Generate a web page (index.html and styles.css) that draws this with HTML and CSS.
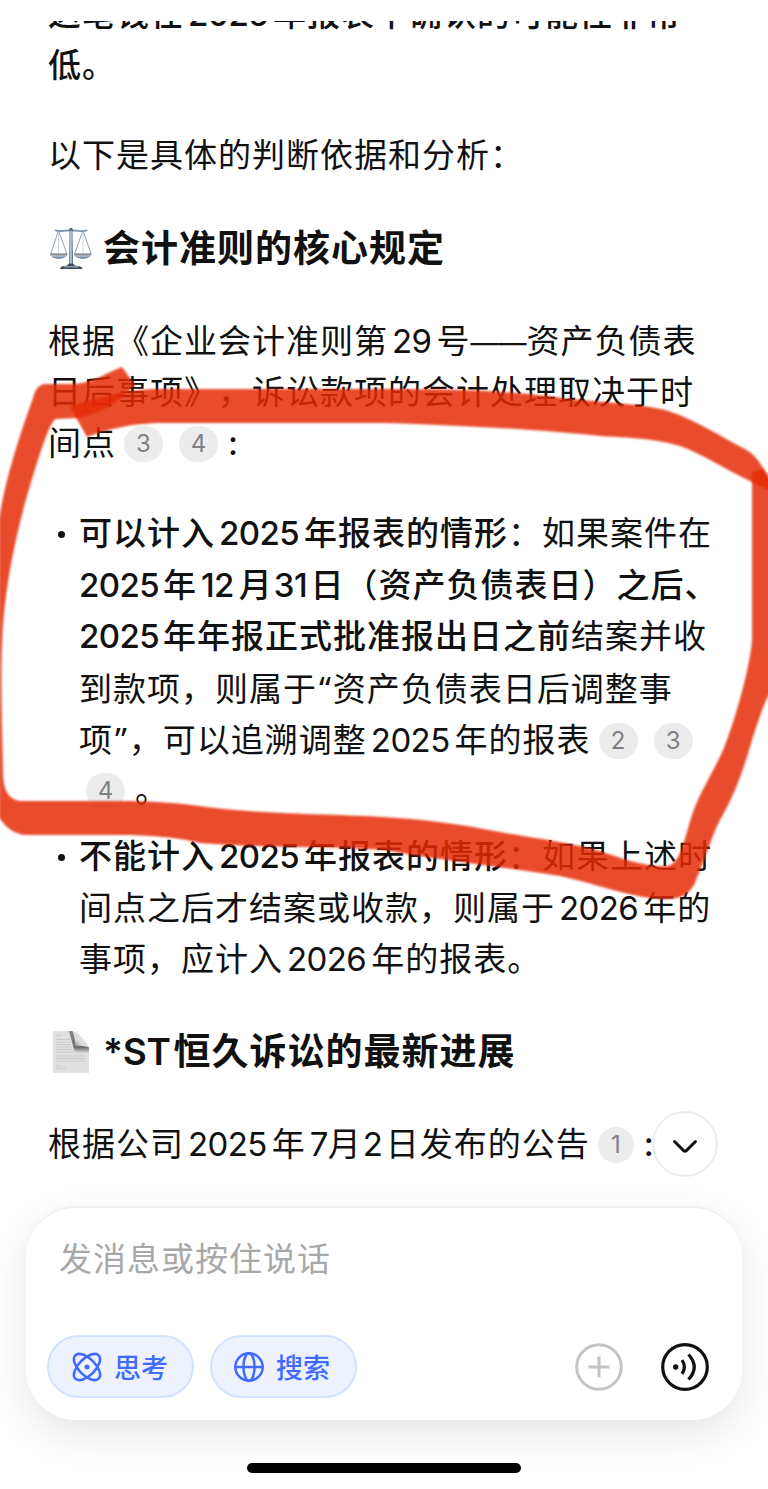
FILE: index.html
```
<!DOCTYPE html>
<html lang="zh-CN">
<head>
    <meta charset="UTF-8">
    <meta name="viewport" content="width=device-width, initial-scale=1.0">
    <title>*ST恒久诉讼</title>
    <link rel="stylesheet" href="styles.css">
</head>
<body>

    <!-- Chat Section -->
    <main class="chat">
        <div class="message">
            <p class="strong">
                <span class="line">这笔钱在<span class="num">2025</span>年报表中确认的可能性非常</span>
                <span class="line">低。</span>
            </p>

            <p class="intro"><span class="line">以下是具体的判断依据和分析：</span></p>

            <h2>
                <svg class="emoji" viewBox="0 0 44 44">
                    <defs>
                        <linearGradient id="metal" x1="0" x2="1">
                            <stop offset="0" stop-color="#5f7389"/>
                            <stop offset="0.5" stop-color="#c5d3e2"/>
                            <stop offset="1" stop-color="#3f536a"/>
                        </linearGradient>
                        <linearGradient id="pan" x1="0" x2="0" y1="0" y2="1">
                            <stop offset="0" stop-color="#6d6a68"/>
                            <stop offset="0.5" stop-color="#b9c8da"/>
                            <stop offset="1" stop-color="#455a73"/>
                        </linearGradient>
                    </defs>
                    <path d="M9.5 3.5 1.8 27M9.5 3.5 18 27M34 3.5 25.5 27M34 3.5 42.2 27" stroke="#8495a9" stroke-width="0.9" fill="none"/>
                    <path d="M9.5 4v22M34 4v22" stroke="#c3ccd6" stroke-width="0.8"/>
                    <path d="M6 3c5 3 11-1 16 1 5-2 11 2 16-1" stroke="#8295ac" stroke-width="1.8" fill="none"/>
                    <circle cx="22" cy="2.6" r="1.9" fill="#5d7086"/>
                    <path d="M20.5 4h3l.6 34h-4.2z" fill="url(#metal)"/>
                    <path d="M1 26.5h17.500c0 3-3.500 5.200-8.700 5.200S1 29.500 1 26.500zM25 26.500h17.500c0 3-3.500 5.200-8.700 5.200S25 29.500 25 26.500z" fill="url(#pan)"/>
                    <path d="M11 42c0-2.500 3-3 7-3.500l2-2h4l2 2c4 .5 7.500 1 7.500 3.500z" fill="#3d4e61"/>
                    <path d="M15 39.800h14" stroke="#b7c6d6" stroke-width="1"/>
                </svg>
                <span class="line">会计准则的核心规定</span>
            </h2>

            <p class="rule">
                <span class="line">根据《企业会计准则第<span class="num">29</span>号<span class="dash">——</span>资产负债表</span>
                <span class="line">日后事项》，诉讼款项的会计处理取决于时</span>
                <span class="line">间点<span class="ref">3</span><span class="ref">4</span><span class="colon">:</span></span>
            </p>

            <ul>
                <li>
                    <span class="line"><b>可以计入<span class="num">2025</span>年报表的情形</b>：如果案件在</span>
                    <span class="line"><b><span class="num first">2025</span>年<span class="num">12</span>月<span class="num near">31</span>日（资产负债表日）之后、</b></span>
                    <span class="line"><b><span class="num first">2025</span>年年报正式批准报出日之前</b>结案并收</span>
                    <span class="line">到款项，则属于<span class="quote">“</span>资产负债表日后调整事</span>
                    <span class="line">项<span class="quote">”</span>，可以追溯调整<span class="num">2025</span>年的报表<span class="ref">2</span><span class="ref">3</span></span>
                    <span class="line"><span class="ref lead">4</span><span class="stop">。</span></span>
                </li>
                <li>
                    <span class="line"><b>不能计入<span class="num">2025</span>年报表的情形</b>：如果上述时</span>
                    <span class="line">间点之后才结案或收款，则属于<span class="num">2026</span>年的</span>
                    <span class="line">事项，应计入<span class="num">2026</span>年的报表。</span>
                </li>
            </ul>

            <h2 class="second">
                <svg class="emoji" viewBox="0 0 44 44">
                    <defs>
                        <linearGradient id="curl" x1="0" x2="1" y1="1" y2="0">
                            <stop offset="0.1" stop-color="#8a8a8a"/>
                            <stop offset="0.4" stop-color="#dcdcdc"/>
                            <stop offset="1" stop-color="#fafafa"/>
                        </linearGradient>
                        <linearGradient id="fold" x1="0" x2="0" y1="0" y2="1">
                            <stop offset="0" stop-color="#8a8a8a"/>
                            <stop offset="0.75" stop-color="#6e6e6e"/>
                            <stop offset="1" stop-color="#dedede"/>
                        </linearGradient>
                    </defs>
                    <path d="M4 1h19l17 17v25H4z" fill="#e0e0e0"/>
                    <path d="M7 5.500h6M7 9.500h14M7 12h15M7 14.500h15M7 17h16M7 19.500h17M7 22h18M7 26h29M7 28.500h29M7 31h28M7 36h5M7 38.500h10" stroke="#cacaca" stroke-width="1"/>
                    <path d="M20 1h4l3 14 13 2v6H26z" fill="url(#fold)"/>
                    <path d="M23 1C29 2 37 10 40 18 36 14 31 15 26 16 28 9 27 4 23 1z" fill="url(#curl)"/>
                </svg>
                <span class="line"><span class="latin">*ST</span>恒久诉讼的最新进展</span>
            </h2>

            <p class="notice"><span class="line">根据公司<span class="num">2025</span>年<span class="num slim">7</span>月<span class="num near">2</span>日发布的公告<span class="ref narrow">1</span><span class="colon">:</span></span></p>
        </div>

        <button class="scroll-btn" aria-label="滚动到底部">
            <svg width="26" height="16" viewBox="0 0 26 16"><path d="M2.500 3.500 11.400 12.300Q13 13.800 14.600 12.300L23.500 3.500" fill="none" stroke="#111" stroke-width="3" stroke-linecap="round"/></svg>
        </button>
    </main>

    <!-- Message Box -->
    <section class="composer">
        <div class="placeholder">发消息或按住说话</div>
        <div class="toolbar">
            <button class="pill">
                <svg width="32" height="32" viewBox="0 0 32 32" fill="none" stroke="#416bff" stroke-width="2.600">
                    <ellipse cx="16" cy="16" rx="16.500" ry="8.300" transform="rotate(45 16 16)"/>
                    <ellipse cx="16" cy="16" rx="16.500" ry="8.300" transform="rotate(-45 16 16)"/>
                    <circle cx="16" cy="16" r="2.500" fill="#416bff" stroke="none"/>
                </svg>
                <span>思考</span>
            </button>
            <button class="pill">
                <svg width="32" height="32" viewBox="0 0 32 32" fill="none" stroke="#416bff" stroke-width="2.500">
                    <circle cx="16" cy="16" r="13.700"/>
                    <ellipse cx="16" cy="16" rx="5.600" ry="13.700"/>
                    <path d="M2.500 16h27"/>
                </svg>
                <span>搜索</span>
            </button>
            <div class="actions">
                <svg width="48" height="48" viewBox="0 0 48 48" fill="none" stroke="#c4c4c4" stroke-width="3">
                    <circle cx="24" cy="24" r="22.300"/>
                    <path d="M24 13.500v21M13.500 24h21"/>
                </svg>
                <svg width="48" height="48" viewBox="0 0 48 48" fill="none" stroke="#111" stroke-width="3.200">
                    <circle cx="24" cy="24" r="22.300"/>
                    <circle cx="14.700" cy="24" r="2.700" fill="#111" stroke="none"/>
                    <path d="M21 17.200Q25.800 24 21 30.800M27.500 11.500Q39 24 27.500 36.500"/>
                </svg>
            </div>
        </div>
    </section>

    <div class="home-bar"></div>

    <!-- Marker circle -->
    <svg class="marker" width="768" height="1489" viewBox="0 0 768 1489">
        <path d="M70 407 87 437C105 430 130 423 165 423H384C480 426 540 430 600 436 640 438 660 440 680 446 700 453 725 469 752 482L772 492V484C762 465 756 455 745 449 720 436 690 417 665 410 630 402 590 402 555 397 500 390 450 389 384 389H160C130 389 95 397 70 407Z"/>
        <path d="M752 472V640C750 668 735 720 724 748 712 775 698 795 691 818 683 845 680 862 668 866 650 867 632 862 615 856 580 843 545 840 500 832 460 824 420 819 384 817 340 814 250 814 200 806 170 802 145 801 120 801H20C8 799 3 790 3 770 2 720 0 670 3 625 8 560 25 500 38 460 45 438 50 425 55 419L78 418C105 412 120 400 135 385L122 367C105 373 93 384 70 384H45C38 385 35 390 33 398 18 440 5 480 -1 520V817C5 827 14 835 28 835H130C160 836 180 838 200 843 260 848 330 846 384 850 440 860 510 868 560 876 600 885 630 897 660 899 680 900 688 895 694 885 703 865 712 835 720 820 735 795 745 765 752 740 762 710 765 700 772 690V484L763 469Z"/>
    </svg>

</body>
</html>
```
FILE: styles.css
```
/* Basic Styles */
* {
    box-sizing: border-box;
}

body {
    font-family: Inter, "Noto Sans CJK SC", sans-serif;
    margin: 0;
    height: 1489px;
    display: flex;
    flex-direction: column;
    background-color: #fff;
    color: #111;
    position: relative;
    overflow: hidden;
}

button {
    font-family: inherit;
    padding: 0;
    cursor: pointer;
}

/* Chat Section */
.chat {
    margin-top: 21px;
    height: 1185px;
    position: relative;
}

.message {
    height: 1185px;
    padding-left: 48px;
    overflow: hidden;
    font-size: 33px;
    line-height: 51.4px;
    letter-spacing: 1px;
    text-spacing-trim: space-all;
}

.message p {
    margin: 0;
}

.line {
    display: block;
    height: 51.4px;
    white-space: nowrap;
}

.message .strong {
    margin-top: -32.5px;
    font-weight: 500;
}

.message .intro {
    margin-top: 38.5px;
}

.message .rule,
.message .notice {
    margin-top: 41px;
}

b {
    font-weight: 500;
}

h2 {
    display: flex;
    align-items: center;
    gap: 10px;
    height: 52px;
    margin: 41.5px 0 0;
    font-size: 37px;
    font-weight: 600;
    letter-spacing: 1px;
}

h2.second {
    margin-top: 40.5px;
}

.latin {
    margin-right: 3px;
    letter-spacing: -0.3px;
}

.emoji {
    width: 44px;
    height: 44px;
    margin-left: 1px;
}

.num {
    margin: 0 5px 0 4px;
    letter-spacing: -0.6px;
}

.num.first {
    margin: 0 4px 0 0;
}

.num.near {
    margin: 0 3.5px 0 1px;
}

.num.slim {
    margin-right: 0;
}

.dash {
    font-size: 28px;
    letter-spacing: 0;
}

.quote {
    margin: 0 1px 0 2px;
    font-family: "Noto Sans", sans-serif;
}

.ref {
    display: inline-flex;
    align-items: center;
    justify-content: center;
    width: 39px;
    height: 36px;
    margin: 0 8px;
    border-radius: 18px;
    background-color: #ececec;
    color: #808085;
    font-size: 24px;
    line-height: 36px;
    letter-spacing: 0;
    vertical-align: 3px;
}

.ref.lead {
    margin-left: 7px;
}

.ref.narrow {
    width: 36px;
}

.colon {
    margin-left: 2px;
    font-weight: 500;
}

.stop {
    margin-left: 2px;
}

ul {
    list-style: none;
    margin: 38.5px 0 0;
    padding: 0 0 0 31px;
}

li {
    position: relative;
}

li + li {
    margin-top: 14.5px;
}

li::before {
    content: "";
    position: absolute;
    left: -21px;
    top: 23px;
    width: 7px;
    height: 7px;
    border-radius: 50%;
    background-color: #111;
}

.scroll-btn {
    position: absolute;
    left: 652px;
    top: 1090px;
    width: 66px;
    height: 66px;
    padding-top: 3px;
    display: flex;
    align-items: center;
    justify-content: center;
    border: 2px solid #ececec;
    border-radius: 50%;
    background-color: #fff;
}

/* Message Box */
.composer {
    width: 716px;
    height: 214px;
    margin-left: 26px;
    padding: 26px 31px 20px 21px;
    border: solid #f0f0f0;
    border-width: 2px 0 0;
    border-radius: 50px;
    background-color: #fff;
    box-shadow: 0 14px 40px rgba(0, 0, 0, 0.1);
    display: flex;
    flex-direction: column;
    justify-content: space-between;
}

.placeholder {
    padding-left: 12px;
    color: #a8a8a8;
    font-size: 33px;
    line-height: 50px;
    letter-spacing: 1px;
}

.toolbar {
    display: flex;
    align-items: center;
    gap: 16px;
    margin-bottom: 2px;
}

.pill {
    display: flex;
    align-items: center;
    justify-content: center;
    gap: 11px;
    width: 147px;
    height: 63px;
    padding-right: 2px;
    border: 2px solid #d3e2ff;
    border-radius: 32px;
    background-color: #edf2fe;
    color: #416bff;
    font-size: 27px;
    font-weight: 500;
}

.pill + .pill {
    padding-right: 4px;
}

.actions {
    display: flex;
    gap: 38px;
    margin-left: auto;
    margin-right: 2px;
}

.home-bar {
    width: 274px;
    height: 10px;
    margin: 43px auto 0;
    border-radius: 5px;
    background-color: #000;
}

/* Marker */
.marker {
    position: absolute;
    left: 0;
    top: 0;
    pointer-events: none;
}

.marker path {
    fill: #e52a05;
    fill-opacity: 0.84;
    filter: blur(1px);
}
```
